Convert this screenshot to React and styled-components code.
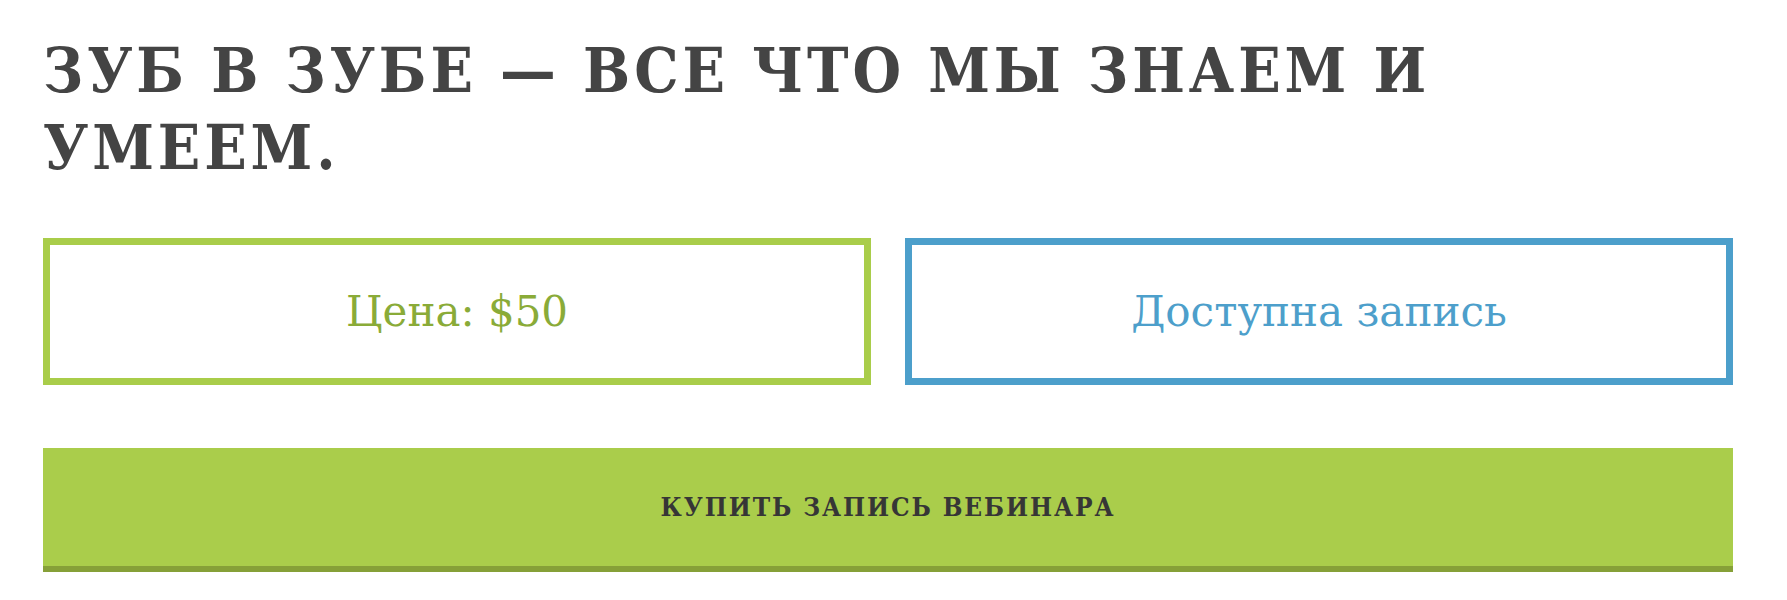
import React from "react";
import styled, { createGlobalStyle } from "styled-components";

const GlobalStyle = createGlobalStyle`
  html, body {
    margin: 0;
    padding: 0;
    background: #fff;
  }
  body {
    font-family: "DejaVu Serif", "Liberation Serif", serif;
  }
`;

const Page = styled.div`
  padding: 32px 54px 0 43px;
`;

const Title = styled.h1`
  margin: 0;
  font-family: "DejaVu Serif Condensed", "DejaVu Serif", serif;
  font-size: 62px;
  line-height: 77px;
  font-weight: 700;
  letter-spacing: 3.9px;
  color: #444444;
`;

const Badges = styled.div`
  display: grid;
  grid-template-columns: 1fr 1fr;
  gap: 34px;
  margin-top: 52px;
`;

const Badge = styled.div`
  height: 147px;
  box-sizing: border-box;
  border: 7px solid ${(p) => p.$color};
  color: ${(p) => p.$text};
  display: flex;
  align-items: center;
  justify-content: center;
  font-size: 42px;
  font-weight: 400;
`;

const BuyButton = styled.button`
  display: block;
  width: 100%;
  height: 124px;
  margin-top: 63px;
  padding: 0;
  border: none;
  border-bottom: 6px solid #86a038;
  background: #aacd4b;
  color: #363636;
  font-family: "DejaVu Serif Condensed", "DejaVu Serif", serif;
  font-size: 26px;
  font-weight: 700;
  letter-spacing: 1.9px;
  cursor: pointer;
`;

export default function App() {
  return (
    <Page>
      <GlobalStyle />
      <Title>ЗУБ В ЗУБЕ — ВСЕ ЧТО МЫ ЗНАЕМ И УМЕЕМ.</Title>
      <Badges>
        <Badge $color="#a9cd4a" $text="#8aab38">Цена: $50</Badge>
        <Badge $color="#4c9fcb" $text="#4d9fcb">Доступна запись</Badge>
      </Badges>
      <BuyButton>КУПИТЬ ЗАПИСЬ ВЕБИНАРА</BuyButton>
    </Page>
  );
}
